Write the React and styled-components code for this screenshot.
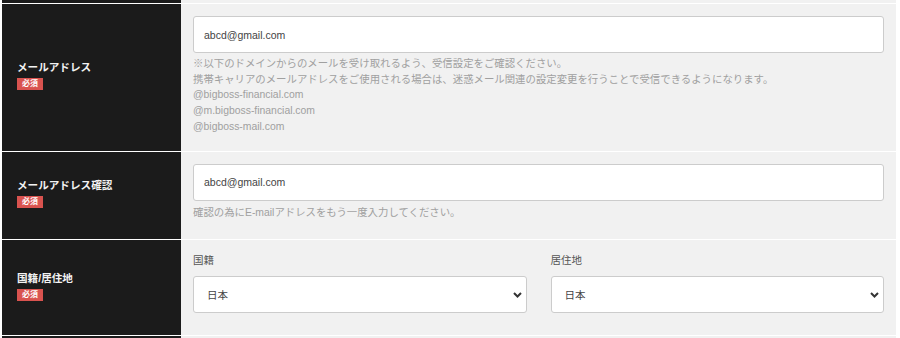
import React from "react";
import styled, { createGlobalStyle } from "styled-components";

const Global = createGlobalStyle`
  html, body { margin: 0; padding: 0; background: #ffffff; }
  body { font-family: "Liberation Sans", "Noto Sans CJK JP", Arial, sans-serif; }
  * { box-sizing: border-box; }
`;

const Form = styled.div`
  display: flex;
  flex-direction: column;
  gap: 1px;
  padding: 0 4px 0 2px;
  background: #ffffff;
  width: 900px;
`;

const Row = styled.div`
  display: grid;
  grid-template-columns: 179px 1fr;
  height: ${(p) => (p.$stub ? `${p.$stub}px` : "auto")};
  overflow: hidden;
`;

const Head = styled.div`
  background: #1b1b1b;
  display: flex;
  flex-direction: column;
  justify-content: center;
  align-items: flex-start;
  padding: 0 15px 5px 15px;
`;

const HeadLabel = styled.div`
  color: #f2f2f2;
  font-weight: bold;
  font-size: 10.6px;
  line-height: 16px;
`;

const Required = styled.span`
  display: inline-block;
  margin-top: 3px;
  background: #d9534f;
  color: #ffffff;
  font-weight: bold;
  font-size: 8px;
  line-height: 12px;
  height: 12px;
  padding: 0 5px;
`;

const Body = styled.div`
  background: #f1f1f1;
  padding: 12px 12px ${(p) => p.$pb ?? 18}px 12px;
  display: flex;
  flex-direction: column;
`;

const TextInput = styled.input`
  display: block;
  width: 100%;
  height: 37px;
  border: 1px solid #cccccc;
  border-radius: 3px;
  background: #ffffff;
  padding: 0 10px;
  font-family: inherit;
  font-size: 10.5px;
  color: #444444;
  outline: none;
`;

const Hint = styled.div`
  margin-top: ${(p) => p.$mt ?? 3}px;
  color: #a0a0a0;
  font-size: 10.4px;
  line-height: 15.7px;
`;

const Pair = styled.div`
  display: grid;
  grid-template-columns: 1fr 1fr;
  column-gap: 24px;
`;

const Field = styled.div`
  display: flex;
  flex-direction: column;
`;

const FieldLabel = styled.div`
  color: #555555;
  font-size: 10.5px;
  line-height: 16px;
  margin-bottom: 8px;
`;

const SelectWrap = styled.div`
  position: relative;
`;

const Select = styled.select`
  appearance: none;
  -webkit-appearance: none;
  display: block;
  width: 100%;
  height: 37px;
  border: 1px solid #cccccc;
  border-radius: 3px;
  background: #ffffff;
  padding: 0 24px 0 13px;
  font-family: inherit;
  font-size: 10.5px;
  color: #444444;
  outline: none;
`;

const Chevron = styled.svg`
  position: absolute;
  right: 5px;
  top: 50%;
  width: 9px;
  height: 6px;
  margin-top: -3px;
  pointer-events: none;
`;

const Input = ({ value }) => <TextInput defaultValue={value} readOnly />;

const Dropdown = ({ value }) => (
  <SelectWrap>
    <Select defaultValue={value}>
      <option value={value}>{value}</option>
    </Select>
    <Chevron viewBox="0 0 9 6">
      <path d="M1 1 L4.5 4.5 L8 1" fill="none" stroke="#333" strokeWidth="2" />
    </Chevron>
  </SelectWrap>
);

const Label = ({ children }) => (
  <Head>
    <HeadLabel>{children}</HeadLabel>
    <Required>必須</Required>
  </Head>
);

export default function App() {
  return (
    <>
      <Global />
      <Form>
        <Row $stub={3}>
          <Head />
          <Body />
        </Row>
        <Row>
          <Label>メールアドレス</Label>
          <Body $pb={16}>
            <Input value="abcd@gmail.com" />
            <Hint>
              ※以下のドメインからのメールを受け取れるよう、受信設定をご確認ください。
              <br />
              携帯キャリアのメールアドレスをご使用される場合は、迷惑メール関連の設定変更を行うことで受信できるようになります。
              <br />
              @bigboss-financial.com
              <br />
              @m.bigboss-financial.com
              <br />
              @bigboss-mail.com
            </Hint>
          </Body>
        </Row>
        <Row>
          <Label>メールアドレス確認</Label>
          <Body $pb={19}>
            <Input value="abcd@gmail.com" />
            <Hint $mt={4}>確認の為にE-mailアドレスをもう一度入力してください。</Hint>
          </Body>
        </Row>
        <Row>
          <Label>国籍/居住地</Label>
          <Body $pb={22}>
            <Pair>
              <Field>
                <FieldLabel>国籍</FieldLabel>
                <Dropdown value="日本" />
              </Field>
              <Field>
                <FieldLabel>居住地</FieldLabel>
                <Dropdown value="日本" />
              </Field>
            </Pair>
          </Body>
        </Row>
        <Row $stub={10}>
          <Head />
          <Body />
        </Row>
      </Form>
    </>
  );
}
